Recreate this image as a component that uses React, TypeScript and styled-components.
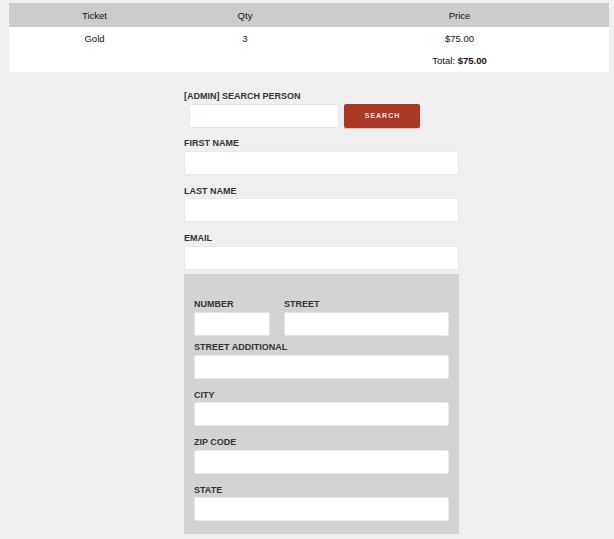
import styled, { createGlobalStyle } from 'styled-components'

const GlobalStyle = createGlobalStyle`
  html, body {
    margin: 0;
    background: #efefef;
    font-family: "Liberation Sans", Arial, sans-serif;
  }
`

const Page = styled.div`
  padding: 3px 5px 0 9px;
`

const CartTable = styled.table`
  width: 600px;
  border-collapse: collapse;
  table-layout: fixed;
  background: #fff;
  font-size: 9.5px;
  color: #111;
`

const HeadCell = styled.th<{ $w: number }>`
  width: ${({ $w }) => $w}px;
  height: 24px;
  padding: 0;
  background: #cccccc;
  font-weight: normal;
  text-align: center;
`

const Cell = styled.td`
  height: 22.5px;
  padding: 0;
  text-align: center;
`

const Form = styled.div`
  width: 275px;
  margin: 17.5px 0 0 175px;
`

const Field = styled.div<{ $mb?: number }>`
  display: flex;
  flex-direction: column;
  margin-bottom: ${({ $mb }) => ($mb ?? 10)}px;
`

const Label = styled.label`
  display: block;
  height: 12px;
  line-height: 12px;
  margin-bottom: 1.5px;
  font-size: 9px;
  font-weight: bold;
  color: #333;
  text-transform: uppercase;
  white-space: nowrap;
`

const Input = styled.input<{ $w?: number }>`
  box-sizing: border-box;
  width: ${({ $w }) => ($w ? `${$w}px` : '100%')};
  height: 24px;
  margin: 0;
  border: 1px solid #e9e9e9;
  border-radius: 2px;
  background: #fff;
  outline: none;
`

const SearchRow = styled.div`
  display: flex;
  align-items: center;
  gap: 5px;
  padding-left: 5px;
  margin-top: 0.5px;
`

const SearchButton = styled.button`
  width: 76px;
  height: 24px;
  border: none;
  border-radius: 2px;
  background: #a93826;
  box-shadow: 0 1px 1px rgba(0, 0, 0, 0.15);
  color: #f6e4e0;
  font-family: "Liberation Sans", Arial, sans-serif;
  font-size: 7px;
  font-weight: bold;
  letter-spacing: 1px;
  padding: 0 0 0 1px;
`

const AddressBox = styled.div`
  background: #d3d3d3;
  padding: 24.3px 10px 12.7px;
`

const AddressRow = styled.div`
  display: flex;
  gap: 14px;
  margin-bottom: 5.5px;
`

export default function App() {
  return (
    <>
      <GlobalStyle />
      <Page>
        <CartTable>
          <thead>
            <tr>
              <HeadCell $w={171}>Ticket</HeadCell>
              <HeadCell $w={130}>Qty</HeadCell>
              <HeadCell $w={299}>Price</HeadCell>
            </tr>
          </thead>
          <tbody>
            <tr>
              <Cell>Gold</Cell>
              <Cell>3</Cell>
              <Cell>$75.00</Cell>
            </tr>
            <tr>
              <Cell />
              <Cell />
              <Cell>
                Total: <b>$75.00</b>
              </Cell>
            </tr>
          </tbody>
        </CartTable>

        <Form>
          <Field $mb={9.5}>
            <Label>[ADMIN] Search person</Label>
            <SearchRow>
              <Input $w={150} />
              <SearchButton>SEARCH</SearchButton>
            </SearchRow>
          </Field>
          <Field>
            <Label>First name</Label>
            <Input />
          </Field>
          <Field>
            <Label>Last name</Label>
            <Input />
          </Field>
          <Field $mb={4.4}>
            <Label>Email</Label>
            <Input />
          </Field>

          <AddressBox>
            <AddressRow>
              <Field $mb={0}>
                <Label>Number</Label>
                <Input $w={76} />
              </Field>
              <Field $mb={0}>
                <Label>Street</Label>
                <Input $w={165} />
              </Field>
            </AddressRow>
            <Field>
              <Label>Street additional</Label>
              <Input />
            </Field>
            <Field>
              <Label>City</Label>
              <Input />
            </Field>
            <Field>
              <Label>Zip code</Label>
              <Input />
            </Field>
            <Field $mb={0}>
              <Label>State</Label>
              <Input />
            </Field>
          </AddressBox>
        </Form>
      </Page>
    </>
  )
}
